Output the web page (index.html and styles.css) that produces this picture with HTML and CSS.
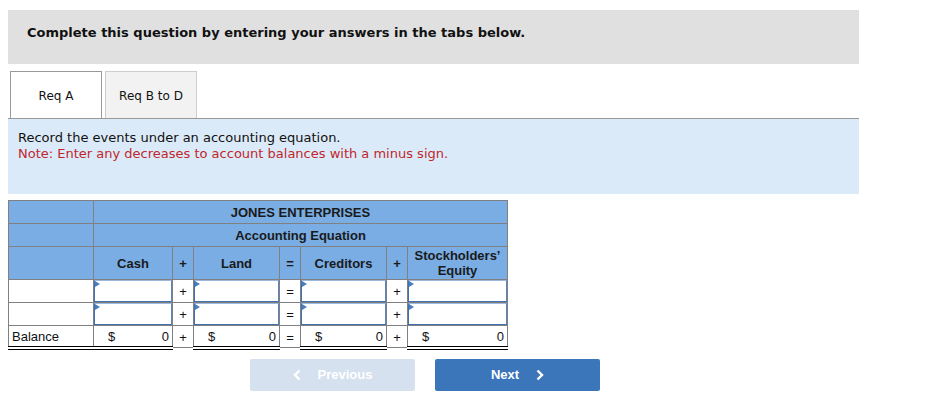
FILE: index.html
```html
<!DOCTYPE html>
<html lang="en">
<head>
<meta charset="utf-8">
<title>Accounting equation</title>
<link rel="stylesheet" href="styles.css">
</head>
<body>
<div class="page">
  <div class="banner">Complete this question by entering your answers in the tabs below.</div>

  <div class="tabs">
    <div class="tab active">Req A</div>
    <div class="tab">Req B to D</div>
  </div>

  <div class="panel">
    <p class="instr">Record the events under an accounting equation.</p>
    <p class="note">Note: Enter any decreases to account balances with a minus sign.</p>
  </div>

  <table class="eq">
    <colgroup>
      <col class="c-label">
      <col class="c-cash">
      <col class="c-op">
      <col class="c-land">
      <col class="c-op">
      <col class="c-cred">
      <col class="c-op">
      <col class="c-se">
    </colgroup>
    <thead>
      <tr class="h-title"><th></th><th colspan="7">JONES ENTERPRISES</th></tr>
      <tr class="h-title"><th></th><th colspan="7">Accounting Equation</th></tr>
      <tr class="h-cols">
        <th></th><th>Cash</th><th class="op">+</th><th>Land</th><th class="op">=</th><th>Creditors</th><th class="op">+</th><th class="se">Stockholders’<br>Equity</th>
      </tr>
    </thead>
    <tbody>
      <tr class="entry">
        <td></td>
        <td class="in"><div class="field"><input type="text" aria-label="Cash 1"></div></td>
        <td class="op">+</td>
        <td class="in"><div class="field"><input type="text" aria-label="Land 1"></div></td>
        <td class="op">=</td>
        <td class="in"><div class="field"><input type="text" aria-label="Creditors 1"></div></td>
        <td class="op">+</td>
        <td class="in"><div class="field"><input type="text" aria-label="Stockholders' Equity 1"></div></td>
      </tr>
      <tr class="entry">
        <td></td>
        <td class="in"><div class="field"><input type="text" aria-label="Cash 2"></div></td>
        <td class="op">+</td>
        <td class="in"><div class="field"><input type="text" aria-label="Land 2"></div></td>
        <td class="op">=</td>
        <td class="in"><div class="field"><input type="text" aria-label="Creditors 2"></div></td>
        <td class="op">+</td>
        <td class="in"><div class="field"><input type="text" aria-label="Stockholders' Equity 2"></div></td>
      </tr>
      <tr class="bal">
        <td class="lbl">Balance</td>
        <td class="amt"><div class="money"><span>$</span><span>0</span></div></td>
        <td class="op">+</td>
        <td class="amt"><div class="money"><span>$</span><span>0</span></div></td>
        <td class="op">=</td>
        <td class="amt"><div class="money"><span>$</span><span>0</span></div></td>
        <td class="op">+</td>
        <td class="amt"><div class="money"><span>$</span><span>0</span></div></td>
      </tr>
    </tbody>
  </table>

  <div class="nav">
    <button class="btn prev" type="button">
      <svg class="chev" width="8" height="12" viewBox="0 0 8 12" aria-hidden="true"><path d="M6.5 1.5 2 6l4.5 4.5" fill="none" stroke="#fff" stroke-width="2.4"/></svg>
      <span>Previous</span>
    </button>
    <button class="btn next" type="button">
      <span>Next</span>
      <svg class="chev" width="8" height="12" viewBox="0 0 8 12" aria-hidden="true"><path d="M1.5 1.5 6 6l-4.5 4.5" fill="none" stroke="#fff" stroke-width="2.4"/></svg>
    </button>
  </div>
</div>
</body>
</html>
```

FILE: styles.css
```css
* { box-sizing: border-box; }

body {
  margin: 0;
  background: #fff;
  font-family: "DejaVu Sans", Verdana, sans-serif;
  color: #111;
}

.page {
  width: 851px;
  margin-left: 8px;
  padding-top: 10px;
}

.banner {
  height: 54px;
  background: #e0e0e0;
  padding: 15px 0 0 19px;
  font-size: 13px;
  line-height: 16px;
  font-weight: bold;
  color: #111;
}

.tabs {
  display: flex;
  gap: 3px;
  margin-top: 7px;
  padding-left: 2px;
  border-bottom: 1px solid #999;
}

.tab {
  width: 92px;
  height: 47px;
  display: flex;
  align-items: center;
  justify-content: center;
  padding-top: 2px;
  font-size: 12px;
  color: #111;
  background: #f2f2f2;
  border: 1px solid #cdcdcd;
  border-bottom: none;
}

.tab.active {
  background: #fff;
  border-color: #999;
}

.panel {
  height: 75px;
  background: #dbeaf8;
  padding: 11px 10px 0;
  font-size: 13px;
  line-height: 16px;
}

.panel p { margin: 0; }
.instr { color: #111; }
.note { color: #c0272d; }

.eq {
  margin-top: 6px;
  border-collapse: collapse;
  table-layout: fixed;
  width: 499px;
  font-family: "Liberation Sans", Arial, sans-serif;
  font-size: 13px;
  color: #111;
}

.c-label { width: 85px; }
.c-cash { width: 79px; }
.c-op { width: 21px; }
.c-land { width: 86px; }
.c-cred { width: 86px; }
.c-se { width: 100px; }

.eq th, .eq td {
  border: 1px solid #808080;
  padding: 0;
}

.eq th {
  background: #79ade3;
  font-weight: bold;
  color: #1a1a1a;
  text-align: center;
}

.h-title th { height: 23px; }
.h-cols th { height: 33px; line-height: 15px; }

.eq td.op {
  text-align: center;
  background: #fff;
}

.entry td { height: 23px; }

.field {
  position: relative;
  height: 22px;
}

.field input {
  display: block;
  width: 100%;
  height: 100%;
  margin: 0;
  border: 1px solid #3e70b2;
  border-top-color: #9cb8de;
  border-right-color: #5a86c0;
  background: #fff;
  font: 13px "Liberation Sans", Arial, sans-serif;
  padding: 0 3px;
}

.field::before {
  content: "";
  position: absolute;
  left: 1px;
  top: 1px;
  width: 0;
  height: 0;
  border-top: 3px solid transparent;
  border-bottom: 3px solid transparent;
  border-left: 5px solid #4a7ebb;
  z-index: 1;
}

.bal td {
  height: 22px;
  padding-top: 1px;
  border-top: 1px solid #000;
  border-bottom: 4px double #000;
}

.bal td.op {
  border-bottom: 1px solid #808080;
}

.bal td.lbl {
  padding-left: 3px;
}

.money {
  display: flex;
  justify-content: space-between;
  padding: 0 3px 0 14px;
}

.nav {
  display: flex;
  gap: 20px;
  margin-top: 9px;
  padding-left: 242px;
}

.btn {
  width: 165px;
  height: 32px;
  border: none;
  border-radius: 2px;
  display: flex;
  align-items: center;
  justify-content: center;
  gap: 17px;
  font-family: "Liberation Sans", Arial, sans-serif;
  font-size: 13px;
  font-weight: bold;
  color: #fff;
  padding: 0;
}

.btn.prev { background: #d5e1ef; }
.btn.next { background: #3a76b9; }

.chev { display: block; }
```
